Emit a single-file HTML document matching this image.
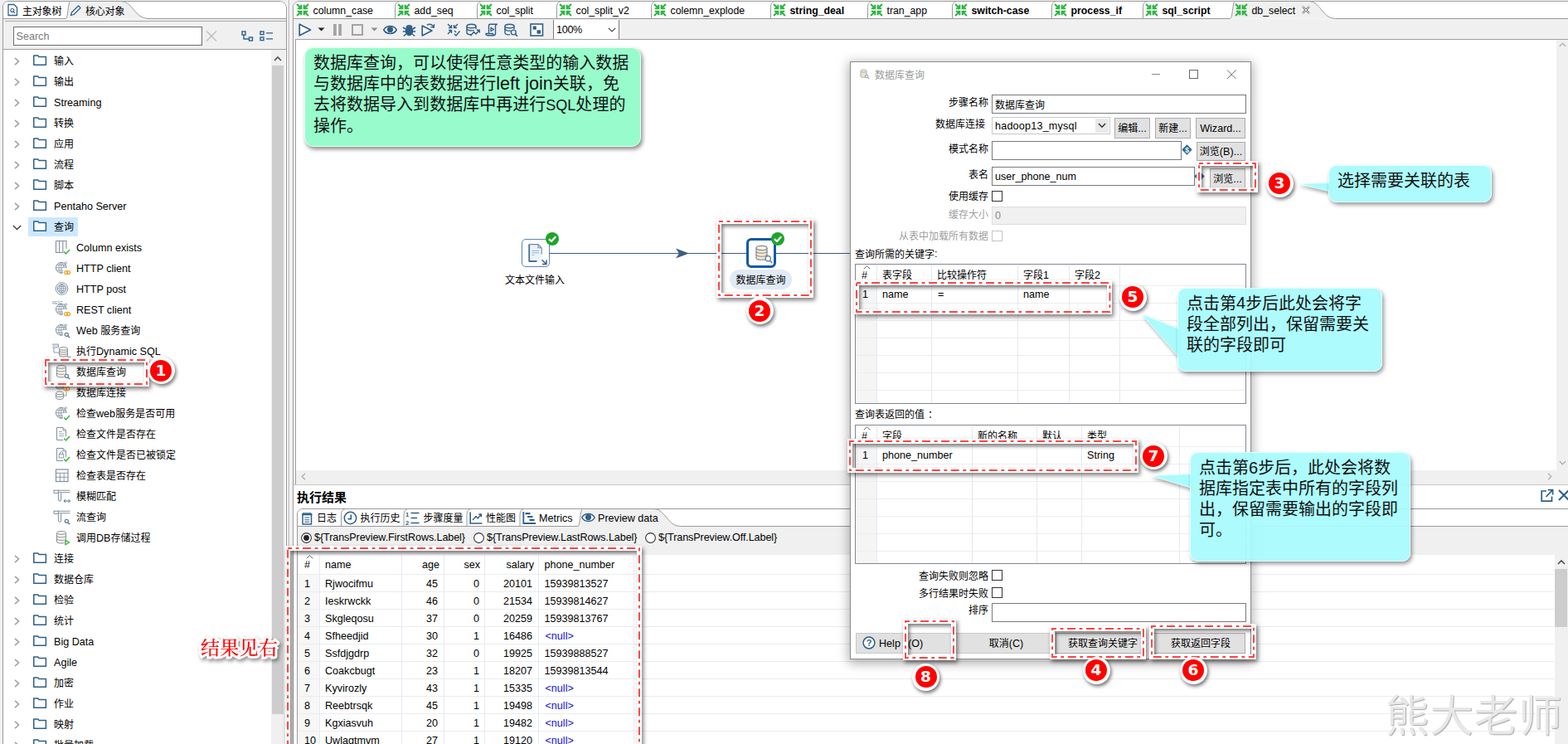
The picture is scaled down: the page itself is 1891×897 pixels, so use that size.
<!DOCTYPE html>
<html lang="zh-CN"><head><meta charset="utf-8"><title>Spoon - db_select</title>
<style>
*{box-sizing:border-box;margin:0;padding:0}
html,body{width:1891px;height:897px;overflow:hidden;background:#f0f0f0}
body{font-family:"Liberation Sans","Noto Sans CJK SC",sans-serif;font-size:12px;color:#000;position:relative}
i.l{font-style:normal;font-size:12.6px;position:relative;top:-0.5px}
.a{position:absolute}
.t{position:absolute;white-space:nowrap;line-height:16px;height:16px}
.r{text-align:right}
svg{position:absolute;overflow:visible}
.g{color:#8a8a8a}
.dash{position:absolute;border:6px solid rgba(255,255,255,.88);
  box-shadow:2px 3px 5px rgba(0,0,0,.5),inset 2px 3px 4px rgba(0,0,0,.5)}
.num{position:absolute;width:33px;height:33px;border-radius:50%;background:#fff;box-shadow:1.5px 2.5px 4px rgba(0,0,0,.55)}
.num b{position:absolute;left:3.5px;top:3.5px;width:26px;height:26px;border-radius:50%;background:#fe0000;color:#fff;
  font:bold 18.5px/26px "DejaVu Sans","Liberation Sans",sans-serif;text-align:center}
.bub{position:absolute;background:rgba(168,251,253,.94);border:1px solid #e8ffff;border-radius:10px;box-shadow:2px 3px 5px rgba(0,0,0,.4);
  font-size:20px;line-height:25px;color:#111}
.bub i.l,.note i.l{font-size:20px}
.note{position:absolute;background:#98fbcb;border:1px solid #e6fff2;border-radius:11px;box-shadow:2px 3px 5px rgba(0,0,0,.45);
  font-size:20px;line-height:25px;color:#111}
.btn{position:absolute;background:#e1e1e1;border:1px solid #adadad;text-align:center;white-space:nowrap}
.inp{position:absolute;background:#fff;border:1px solid #7a7a7a}
.cb{position:absolute;width:13px;height:13px;background:#fff;border:1px solid #333}
</style></head>
<body>
<div class="a " style="left:3px;top:1px;width:343px;height:900px;background:#f0f0f0;border:1px solid #9a9a9a;border-radius:7px 9px 0 0"></div>
<div class="a " style="left:4px;top:2px;width:341px;height:21px;background:#fff;border-radius:6px 8px 0 0"></div>
<svg style="left:0px;top:0px" width="1891" height="897" viewBox="0 0 1891 897"><path d="M79.3 22.5 C82.1 22.5 81.8 2.0 84.8 1.5 H146 C159.86 1.5 162.5 22.5 179 22.5 Z" fill="#f0f0f0"/><path d="M4 22.5 H79.3 C82.1 22.5 81.8 2.0 84.8 1.5 H146 C159.86 1.5 162.5 22.5 179 22.5 H345" fill="none" stroke="#9a9a9a"/></svg>
<div class="a " style="left:6px;top:25px;width:339px;height:1px;background:#a8a8a8"></div>
<svg style="left:9px;top:4px" width="13" height="16" viewBox="0 0 13 16"><path d="M1 1.5 H8 L11.5 5 V14.5 H1 Z" fill="#fff" stroke="#2f5f8a" stroke-width="1.3" stroke-linejoin="round"/><circle cx="5.8" cy="8.5" r="2" fill="none" stroke="#2f5f8a" stroke-width="1.1"/><path d="M7.3 10 L9 11.8" stroke="#2f5f8a" stroke-width="1.1"/></svg>
<div class="t " style="left:27px;top:5.5px;letter-spacing:-0.2px">主对象树</div>
<svg style="left:84px;top:5px" width="15" height="15" viewBox="0 0 15 15"><path d="M1.5 13.5 L2.5 10 L10.5 2 L13 4.5 L5 12.5 Z" fill="#fff" stroke="#2f5f8a" stroke-width="1.3" stroke-linejoin="round"/></svg>
<div class="t " style="left:103px;top:5.5px;letter-spacing:-0.2px">核心对象</div>
<div class="a " style="left:4px;top:26px;width:341px;height:33px;background:#f0f0f0"></div>
<div class="a " style="left:16px;top:32px;width:228px;height:23px;background:#fff;border:1px solid #6e6e6e"></div>
<div class="t " style="left:19.5px;top:36.0px;color:#7a7a7a;font-size:12px"><i class="l">Search</i></div>
<svg style="left:248px;top:37px" width="14" height="13" viewBox="0 0 14 13"><path d="M1 0.5 L13 12.5 M13 0.5 L1 12.5" stroke="#c4c4c4" stroke-width="1.6" fill="none"/></svg>
<svg style="left:291px;top:37px" width="15" height="13" viewBox="0 0 15 13"><rect x="1" y="1" width="4" height="4" fill="none" stroke="#2f5f8a" stroke-width="1.4"/><rect x="9.5" y="8" width="4" height="4" fill="none" stroke="#2f5f8a" stroke-width="1.4"/><path d="M3 5 V10 H9.5" fill="none" stroke="#2f5f8a" stroke-width="1.4"/></svg>
<svg style="left:313px;top:37px" width="16" height="13" viewBox="0 0 16 13"><rect x="1" y="1" width="4" height="3.6" fill="none" stroke="#2f5f8a" stroke-width="1.4"/><rect x="1" y="8" width="4" height="3.6" fill="none" stroke="#2f5f8a" stroke-width="1.4"/><path d="M8 2.8 H16 M8 9.8 H16" stroke="#2f5f8a" stroke-width="1.3"/></svg>
<div class="a " style="left:4px;top:59px;width:341px;height:1px;background:#a0a0a0"></div>
<div class="a " style="left:4px;top:60px;width:341px;height:840px;background:#fff"></div>
<div class="a " style="left:327px;top:60px;width:17px;height:840px;background:#f0f0f0"></div>
<div class="a " style="left:328px;top:79px;width:14px;height:782px;background:#cdcdcd"></div>
<svg style="left:330px;top:68px" width="10" height="6" viewBox="0 0 10 6"><path d="M1 5 L5 1 L9 5" fill="none" stroke="#505050" stroke-width="1.6"/></svg>
<svg style="left:17.3px;top:68.5px" width="7" height="10" viewBox="0 0 7 10"><path d="M1 0.8 L5.5 5 L1 9.2" fill="none" stroke="#a3a3a3" stroke-width="1.7"/></svg>
<svg style="left:40px;top:66.1px" width="17" height="13" viewBox="0 0 17 13"><path d="M0.75 1 H5.8 L7 2.6 H15.4 V12.2 H0.75 Z" fill="#fff" stroke="#2f5f8a" stroke-width="1.5" stroke-linejoin="round"/></svg>
<div class="t " style="left:65px;top:66.0px;">输入</div>
<svg style="left:17.3px;top:93.5px" width="7" height="10" viewBox="0 0 7 10"><path d="M1 0.8 L5.5 5 L1 9.2" fill="none" stroke="#a3a3a3" stroke-width="1.7"/></svg>
<svg style="left:40px;top:91.1px" width="17" height="13" viewBox="0 0 17 13"><path d="M0.75 1 H5.8 L7 2.6 H15.4 V12.2 H0.75 Z" fill="#fff" stroke="#2f5f8a" stroke-width="1.5" stroke-linejoin="round"/></svg>
<div class="t " style="left:65px;top:91.0px;">输出</div>
<svg style="left:17.3px;top:118.5px" width="7" height="10" viewBox="0 0 7 10"><path d="M1 0.8 L5.5 5 L1 9.2" fill="none" stroke="#a3a3a3" stroke-width="1.7"/></svg>
<svg style="left:40px;top:116.1px" width="17" height="13" viewBox="0 0 17 13"><path d="M0.75 1 H5.8 L7 2.6 H15.4 V12.2 H0.75 Z" fill="#fff" stroke="#2f5f8a" stroke-width="1.5" stroke-linejoin="round"/></svg>
<div class="t " style="left:65px;top:116.0px;"><i class="l">Streaming</i></div>
<svg style="left:17.3px;top:143.5px" width="7" height="10" viewBox="0 0 7 10"><path d="M1 0.8 L5.5 5 L1 9.2" fill="none" stroke="#a3a3a3" stroke-width="1.7"/></svg>
<svg style="left:40px;top:141.1px" width="17" height="13" viewBox="0 0 17 13"><path d="M0.75 1 H5.8 L7 2.6 H15.4 V12.2 H0.75 Z" fill="#fff" stroke="#2f5f8a" stroke-width="1.5" stroke-linejoin="round"/></svg>
<div class="t " style="left:65px;top:141.0px;">转换</div>
<svg style="left:17.3px;top:168.5px" width="7" height="10" viewBox="0 0 7 10"><path d="M1 0.8 L5.5 5 L1 9.2" fill="none" stroke="#a3a3a3" stroke-width="1.7"/></svg>
<svg style="left:40px;top:166.1px" width="17" height="13" viewBox="0 0 17 13"><path d="M0.75 1 H5.8 L7 2.6 H15.4 V12.2 H0.75 Z" fill="#fff" stroke="#2f5f8a" stroke-width="1.5" stroke-linejoin="round"/></svg>
<div class="t " style="left:65px;top:166.0px;">应用</div>
<svg style="left:17.3px;top:193.5px" width="7" height="10" viewBox="0 0 7 10"><path d="M1 0.8 L5.5 5 L1 9.2" fill="none" stroke="#a3a3a3" stroke-width="1.7"/></svg>
<svg style="left:40px;top:191.1px" width="17" height="13" viewBox="0 0 17 13"><path d="M0.75 1 H5.8 L7 2.6 H15.4 V12.2 H0.75 Z" fill="#fff" stroke="#2f5f8a" stroke-width="1.5" stroke-linejoin="round"/></svg>
<div class="t " style="left:65px;top:191.0px;">流程</div>
<svg style="left:17.3px;top:218.5px" width="7" height="10" viewBox="0 0 7 10"><path d="M1 0.8 L5.5 5 L1 9.2" fill="none" stroke="#a3a3a3" stroke-width="1.7"/></svg>
<svg style="left:40px;top:216.1px" width="17" height="13" viewBox="0 0 17 13"><path d="M0.75 1 H5.8 L7 2.6 H15.4 V12.2 H0.75 Z" fill="#fff" stroke="#2f5f8a" stroke-width="1.5" stroke-linejoin="round"/></svg>
<div class="t " style="left:65px;top:216.0px;">脚本</div>
<svg style="left:17.3px;top:243.5px" width="7" height="10" viewBox="0 0 7 10"><path d="M1 0.8 L5.5 5 L1 9.2" fill="none" stroke="#a3a3a3" stroke-width="1.7"/></svg>
<svg style="left:40px;top:241.1px" width="17" height="13" viewBox="0 0 17 13"><path d="M0.75 1 H5.8 L7 2.6 H15.4 V12.2 H0.75 Z" fill="#fff" stroke="#2f5f8a" stroke-width="1.5" stroke-linejoin="round"/></svg>
<div class="t " style="left:65px;top:241.0px;"><i class="l">Pentaho Server</i></div>
<div class="a " style="left:34px;top:262px;width:60px;height:23px;background:#cce8ff"></div>
<svg style="left:15px;top:270.5px" width="11" height="7" viewBox="0 0 11 7"><path d="M0.8 1 L5.5 5.5 L10.2 1" fill="none" stroke="#404040" stroke-width="1.5"/></svg>
<svg style="left:40px;top:266.1px" width="17" height="13" viewBox="0 0 17 13"><path d="M0.75 1 H5.8 L7 2.6 H15.4 V12.2 H0.75 Z" fill="#fff" stroke="#2f5f8a" stroke-width="1.5" stroke-linejoin="round"/></svg>
<div class="t " style="left:65px;top:266.0px;">查询</div>
<svg style="left:66px;top:289.0px" width="19" height="19" viewBox="0 0 19 19"><path d="M1.5 1.5 H14 V11 M1.5 1.5 V15.5 H10.5 M5.6 1.5 V15.5 M9.8 1.5 V15.5" fill="none" stroke="#8090a0" stroke-width="1.1"/><path d="M11.3 14.6 L13.5 16.9 L18 12" fill="none" stroke="#34b234" stroke-width="1.5"/></svg>
<div class="t " style="left:92px;top:291.0px;"><i class="l">Column exists</i></div>
<svg style="left:66px;top:314.0px" width="19" height="19" viewBox="0 0 19 19"><circle cx="7.8" cy="8.8" r="6.4" fill="#fff" stroke="#8090a0" stroke-width="1"/><ellipse cx="7.8" cy="8.8" rx="2.8800000000000003" ry="6.4" fill="none" stroke="#8090a0" stroke-width="0.8"/><path d="M1.3999999999999995 8.8 H14.2 M2.3599999999999994 5.6000000000000005 H13.24 M2.3599999999999994 12.0 H13.24 M7.8 2.4000000000000004 V15.200000000000001" stroke="#8090a0" stroke-width="0.8" fill="none"/><path d="M9.5 1.5 H19 V9.5 H14.5 V19 H9.5Z" fill="#fff" opacity="0"/><path d="M10 9 H19 V19 H10Z" fill="#fff"/><circle cx="13.3" cy="3" r="1.2" fill="#fff" stroke="#8090a0" stroke-width="0.8"/><circle cx="12.3" cy="6.5" r="0.9" fill="#fff" stroke="#8090a0" stroke-width="0.7"/><circle cx="13.6" cy="14.6" r="2" fill="none" stroke="#f5a01e" stroke-width="1.2"/><circle cx="16.6" cy="14.6" r="2" fill="none" stroke="#f5a01e" stroke-width="1.2"/></svg>
<div class="t " style="left:92px;top:316.0px;"><i class="l">HTTP client</i></div>
<svg style="left:66px;top:339.0px" width="19" height="19" viewBox="0 0 19 19"><circle cx="8.5" cy="9" r="7.3" fill="#fff" stroke="#8090a0" stroke-width="1"/><circle cx="8.5" cy="9" r="5.2" fill="#fff" stroke="#8090a0" stroke-width="1"/><ellipse cx="8.5" cy="9" rx="2.3400000000000003" ry="5.2" fill="none" stroke="#8090a0" stroke-width="0.8"/><path d="M3.3 9 H13.7 M4.08 6.4 H12.92 M4.08 11.6 H12.92 M8.5 3.8 V14.2" stroke="#8090a0" stroke-width="0.8" fill="none"/></svg>
<div class="t " style="left:92px;top:341.0px;"><i class="l">HTTP post</i></div>
<svg style="left:66px;top:364.0px" width="19" height="19" viewBox="0 0 19 19"><circle cx="7.8" cy="8.8" r="6.4" fill="#fff" stroke="#8090a0" stroke-width="1"/><ellipse cx="7.8" cy="8.8" rx="2.8800000000000003" ry="6.4" fill="none" stroke="#8090a0" stroke-width="0.8"/><path d="M1.3999999999999995 8.8 H14.2 M2.3599999999999994 5.6000000000000005 H13.24 M2.3599999999999994 12.0 H13.24 M7.8 2.4000000000000004 V15.200000000000001" stroke="#8090a0" stroke-width="0.8" fill="none"/><path d="M9.5 1.5 H19 V9.5 H14.5 V19 H9.5Z" fill="#fff" opacity="0"/><path d="M10 9 H19 V19 H10Z" fill="#fff"/><circle cx="13.3" cy="3" r="1.2" fill="#fff" stroke="#8090a0" stroke-width="0.8"/><circle cx="12.3" cy="6.5" r="0.9" fill="#fff" stroke="#8090a0" stroke-width="0.7"/><circle cx="13.6" cy="14.6" r="2" fill="none" stroke="#f5a01e" stroke-width="1.2"/><circle cx="16.6" cy="14.6" r="2" fill="none" stroke="#f5a01e" stroke-width="1.2"/><text x="-3" y="3.2" font-size="4.6" font-family="Liberation Sans,sans-serif" fill="#8090a0">REST</text></svg>
<div class="t " style="left:92px;top:366.0px;"><i class="l">REST client</i></div>
<svg style="left:66px;top:389.0px" width="19" height="19" viewBox="0 0 19 19"><circle cx="7.8" cy="8.8" r="6.4" fill="#fff" stroke="#8090a0" stroke-width="1"/><ellipse cx="7.8" cy="8.8" rx="2.8800000000000003" ry="6.4" fill="none" stroke="#8090a0" stroke-width="0.8"/><path d="M1.3999999999999995 8.8 H14.2 M2.3599999999999994 5.6000000000000005 H13.24 M2.3599999999999994 12.0 H13.24 M7.8 2.4000000000000004 V15.200000000000001" stroke="#8090a0" stroke-width="0.8" fill="none"/><path d="M9.5 1.5 H19 V9.5 H14.5 V19 H9.5Z" fill="#fff" opacity="0"/><path d="M10 9 H19 V19 H10Z" fill="#fff"/><circle cx="13.3" cy="3" r="1.2" fill="#fff" stroke="#8090a0" stroke-width="0.8"/><circle cx="12.3" cy="6.5" r="0.9" fill="#fff" stroke="#8090a0" stroke-width="0.7"/><circle cx="14.3" cy="14.3" r="2.1" fill="#fff" stroke="#54708c" stroke-width="1.1"/><path d="M15.9 15.9 L18.2 18.2" stroke="#54708c" stroke-width="1.3"/></svg>
<div class="t " style="left:92px;top:391.0px;"><i class="l">Web </i>服务查询</div>
<svg style="left:66px;top:414.0px" width="19" height="19" viewBox="0 0 19 19"><path d="M5.5 6.4 V14.1 C5.5 16.6 15.5 16.6 15.5 14.1 V6.4" fill="#fdf3e4" stroke="#8090a0" stroke-width="1"/><ellipse cx="10.5" cy="6.4" rx="5.0" ry="1.9" fill="#fffaf2" stroke="#8090a0" stroke-width="1"/><path d="M5.5 8.966666666666667 C5.5 11.466666666666667 15.5 11.466666666666667 15.5 8.966666666666667" fill="none" stroke="#8090a0" stroke-width="0.9"/><path d="M5.5 11.533333333333335 C5.5 14.033333333333335 15.5 14.033333333333335 15.5 11.533333333333335" fill="none" stroke="#8090a0" stroke-width="0.9"/><path d="M-3 1 H4.5 V5 H-3" fill="#fff" stroke="#8090a0" stroke-width="0.8"/><text x="-2.8" y="4.2" font-size="3.8" font-family="Liberation Sans,sans-serif" fill="#8090a0">SQL</text><path d="M-1 5 V11 H5.5" fill="none" stroke="#8090a0" stroke-width="0.9"/><path d="M15 15 L18 18 M18.3 15.4 V18.3 H15.4" stroke="#54708c" stroke-width="1" fill="none"/></svg>
<div class="t " style="left:92px;top:416.0px;">执行<i class="l">Dynamic SQL</i></div>
<svg style="left:66px;top:439.0px" width="19" height="19" viewBox="0 0 19 19"><path d="M2.5 3.4 V14.1 C2.5 16.6 13.5 16.6 13.5 14.1 V3.4" fill="#fdf3e4" stroke="#8090a0" stroke-width="1"/><ellipse cx="8.0" cy="3.4" rx="5.5" ry="1.9" fill="#fffaf2" stroke="#8090a0" stroke-width="1"/><path d="M2.5 6.966666666666667 C2.5 9.466666666666667 13.5 9.466666666666667 13.5 6.966666666666667" fill="none" stroke="#8090a0" stroke-width="0.9"/><path d="M2.5 10.533333333333333 C2.5 13.033333333333333 13.5 13.033333333333333 13.5 10.533333333333333" fill="none" stroke="#8090a0" stroke-width="0.9"/><path d="M11.5 11.5 H19 V19 H11.5Z" fill="#fff"/><circle cx="14.3" cy="14.3" r="2.1" fill="#fff" stroke="#54708c" stroke-width="1.1"/><path d="M15.9 15.9 L18.2 18.2" stroke="#54708c" stroke-width="1.3"/></svg>
<div class="t " style="left:92px;top:441.0px;">数据库查询</div>
<svg style="left:66px;top:464.0px" width="19" height="19" viewBox="0 0 19 19"><path d="M1.5 -0.10000000000000009 V3.1 C1.5 5.6 10.5 5.6 10.5 3.1 V-0.10000000000000009" fill="#fdf3e4" stroke="#8090a0" stroke-width="1"/><ellipse cx="6.0" cy="-0.10000000000000009" rx="4.5" ry="1.9" fill="#fffaf2" stroke="#8090a0" stroke-width="1"/><path d="M1.5 1.5 C1.5 4.0 10.5 4.0 10.5 1.5" fill="none" stroke="#8090a0" stroke-width="0.9"/><path d="M1.5 9.9 V15.6 C1.5 18.1 10.5 18.1 10.5 15.6 V9.9" fill="#fdf3e4" stroke="#8090a0" stroke-width="1"/><ellipse cx="6.0" cy="9.9" rx="4.5" ry="1.9" fill="#fffaf2" stroke="#8090a0" stroke-width="1"/><path d="M1.5 12.75 C1.5 15.25 10.5 15.25 10.5 12.75" fill="none" stroke="#8090a0" stroke-width="0.9"/><path d="M10.5 13 H14 V7.5" fill="none" stroke="#8090a0" stroke-width="0.9"/><circle cx="12.8" cy="4.8" r="2" fill="#fff" stroke="#f5a01e" stroke-width="1.2"/><circle cx="15.8" cy="4.8" r="2" fill="none" stroke="#f5a01e" stroke-width="1.2"/></svg>
<div class="t " style="left:92px;top:466.0px;">数据库连接</div>
<svg style="left:66px;top:489.0px" width="19" height="19" viewBox="0 0 19 19"><circle cx="7.8" cy="8.8" r="6.4" fill="#fff" stroke="#8090a0" stroke-width="1"/><ellipse cx="7.8" cy="8.8" rx="2.8800000000000003" ry="6.4" fill="none" stroke="#8090a0" stroke-width="0.8"/><path d="M1.3999999999999995 8.8 H14.2 M2.3599999999999994 5.6000000000000005 H13.24 M2.3599999999999994 12.0 H13.24 M7.8 2.4000000000000004 V15.200000000000001" stroke="#8090a0" stroke-width="0.8" fill="none"/><path d="M9.5 1.5 H19 V9.5 H14.5 V19 H9.5Z" fill="#fff" opacity="0"/><path d="M10 9 H19 V19 H10Z" fill="#fff"/><circle cx="13.3" cy="3" r="1.2" fill="#fff" stroke="#8090a0" stroke-width="0.8"/><circle cx="12.3" cy="6.5" r="0.9" fill="#fff" stroke="#8090a0" stroke-width="0.7"/><path d="M11.3 14.6 L13.5 16.9 L18 12" fill="none" stroke="#34b234" stroke-width="1.5"/></svg>
<div class="t " style="left:92px;top:491.0px;">检查<i class="l">web</i>服务是否可用</div>
<svg style="left:66px;top:514.0px" width="19" height="19" viewBox="0 0 19 19"><path d="M2.5 1.5 H10 L13.5 5 V12 M2.5 1.5 V16.5 H10 M10 1.5 V5 H13.5" fill="none" stroke="#8090a0" stroke-width="1"/><path d="M5 6.5 H9 M5 9 H11 M5 11.5 H11" stroke="#8090a0" stroke-width="0.8"/><path d="M11.3 14.6 L13.5 16.9 L18 12" fill="none" stroke="#34b234" stroke-width="1.5"/></svg>
<div class="t " style="left:92px;top:516.0px;">检查文件是否存在</div>
<svg style="left:66px;top:539.0px" width="19" height="19" viewBox="0 0 19 19"><path d="M2.5 1.5 H10 L13.5 5 V12 M2.5 1.5 V16.5 H10 M10 1.5 V5 H13.5" fill="none" stroke="#8090a0" stroke-width="1"/><rect x="5.2" y="8.6" width="5.6" height="4.2" fill="none" stroke="#8090a0" stroke-width="0.9"/><path d="M6.4 8.6 V7.2 A1.6 1.6 0 0 1 9.6 7.2 V8.6" fill="none" stroke="#8090a0" stroke-width="0.9"/><path d="M11.3 14.6 L13.5 16.9 L18 12" fill="none" stroke="#34b234" stroke-width="1.5"/></svg>
<div class="t " style="left:92px;top:541.0px;">检查文件是否已被锁定</div>
<svg style="left:66px;top:564.0px" width="19" height="19" viewBox="0 0 19 19"><rect x="1.5" y="2" width="14.5" height="14.5" fill="#fff" stroke="#8090a0" stroke-width="1.2"/><path d="M1.5 6.3 H16 M1.5 11.3 H16 M6.4 6.3 V16.5 M11.2 6.3 V16.5" stroke="#8090a0" stroke-width="0.9"/></svg>
<div class="t " style="left:92px;top:566.0px;">检查表是否存在</div>
<svg style="left:66px;top:589.0px" width="19" height="19" viewBox="0 0 19 19"><path d="M-1 2.2 H18.5 M5 4.8 H18.5" stroke="#8090a0" stroke-width="1.1"/><path d="M-1 1.6 V5.4 H4.4 V1.6" fill="none" stroke="#8090a0" stroke-width="1"/><path d="M4.4 5 V14 C4.4 15.6 7.6 15.6 7.6 14 V5" fill="#fff" stroke="#8090a0" stroke-width="1"/><path d="M11 15 H18.5 M13 13 L11 15 L13 17 M16.5 13 L18.5 15 L16.5 17" fill="none" stroke="#54708c" stroke-width="1"/></svg>
<div class="t " style="left:92px;top:591.0px;">模糊匹配</div>
<svg style="left:66px;top:614.0px" width="19" height="19" viewBox="0 0 19 19"><path d="M-1 2.2 H18.5 M5 4.8 H18.5" stroke="#8090a0" stroke-width="1.1"/><path d="M-1 1.6 V5.4 H4.4 V1.6" fill="none" stroke="#8090a0" stroke-width="1"/><path d="M4.4 5 V14 C4.4 15.6 7.6 15.6 7.6 14 V5" fill="#fff" stroke="#8090a0" stroke-width="1"/><circle cx="14.3" cy="14.3" r="2.1" fill="#fff" stroke="#54708c" stroke-width="1.1"/><path d="M15.9 15.9 L18.2 18.2" stroke="#54708c" stroke-width="1.3"/></svg>
<div class="t " style="left:92px;top:616.0px;">流查询</div>
<svg style="left:66px;top:639.0px" width="19" height="19" viewBox="0 0 19 19"><path d="M2.5 3.4 V14.1 C2.5 16.6 13.5 16.6 13.5 14.1 V3.4" fill="#fdf3e4" stroke="#8090a0" stroke-width="1"/><ellipse cx="8.0" cy="3.4" rx="5.5" ry="1.9" fill="#fffaf2" stroke="#8090a0" stroke-width="1"/><path d="M2.5 6.966666666666667 C2.5 9.466666666666667 13.5 9.466666666666667 13.5 6.966666666666667" fill="none" stroke="#8090a0" stroke-width="0.9"/><path d="M2.5 10.533333333333333 C2.5 13.033333333333333 13.5 13.033333333333333 13.5 10.533333333333333" fill="none" stroke="#8090a0" stroke-width="0.9"/><path d="M11.5 11.5 H19 V19 H11.5Z" fill="#fff"/><path d="M12.8 12.2 L17.6 15 L12.8 17.8 Z" fill="#fff" stroke="#34b234" stroke-width="1.3" stroke-linejoin="round"/></svg>
<div class="t " style="left:92px;top:641.0px;">调用<i class="l">DB</i>存储过程</div>
<svg style="left:17.3px;top:668.5px" width="7" height="10" viewBox="0 0 7 10"><path d="M1 0.8 L5.5 5 L1 9.2" fill="none" stroke="#a3a3a3" stroke-width="1.7"/></svg>
<svg style="left:40px;top:666.1px" width="17" height="13" viewBox="0 0 17 13"><path d="M0.75 1 H5.8 L7 2.6 H15.4 V12.2 H0.75 Z" fill="#fff" stroke="#2f5f8a" stroke-width="1.5" stroke-linejoin="round"/></svg>
<div class="t " style="left:65px;top:666.0px;">连接</div>
<svg style="left:17.3px;top:693.5px" width="7" height="10" viewBox="0 0 7 10"><path d="M1 0.8 L5.5 5 L1 9.2" fill="none" stroke="#a3a3a3" stroke-width="1.7"/></svg>
<svg style="left:40px;top:691.1px" width="17" height="13" viewBox="0 0 17 13"><path d="M0.75 1 H5.8 L7 2.6 H15.4 V12.2 H0.75 Z" fill="#fff" stroke="#2f5f8a" stroke-width="1.5" stroke-linejoin="round"/></svg>
<div class="t " style="left:65px;top:691.0px;">数据仓库</div>
<svg style="left:17.3px;top:718.5px" width="7" height="10" viewBox="0 0 7 10"><path d="M1 0.8 L5.5 5 L1 9.2" fill="none" stroke="#a3a3a3" stroke-width="1.7"/></svg>
<svg style="left:40px;top:716.1px" width="17" height="13" viewBox="0 0 17 13"><path d="M0.75 1 H5.8 L7 2.6 H15.4 V12.2 H0.75 Z" fill="#fff" stroke="#2f5f8a" stroke-width="1.5" stroke-linejoin="round"/></svg>
<div class="t " style="left:65px;top:716.0px;">检验</div>
<svg style="left:17.3px;top:743.5px" width="7" height="10" viewBox="0 0 7 10"><path d="M1 0.8 L5.5 5 L1 9.2" fill="none" stroke="#a3a3a3" stroke-width="1.7"/></svg>
<svg style="left:40px;top:741.1px" width="17" height="13" viewBox="0 0 17 13"><path d="M0.75 1 H5.8 L7 2.6 H15.4 V12.2 H0.75 Z" fill="#fff" stroke="#2f5f8a" stroke-width="1.5" stroke-linejoin="round"/></svg>
<div class="t " style="left:65px;top:741.0px;">统计</div>
<svg style="left:17.3px;top:768.5px" width="7" height="10" viewBox="0 0 7 10"><path d="M1 0.8 L5.5 5 L1 9.2" fill="none" stroke="#a3a3a3" stroke-width="1.7"/></svg>
<svg style="left:40px;top:766.1px" width="17" height="13" viewBox="0 0 17 13"><path d="M0.75 1 H5.8 L7 2.6 H15.4 V12.2 H0.75 Z" fill="#fff" stroke="#2f5f8a" stroke-width="1.5" stroke-linejoin="round"/></svg>
<div class="t " style="left:65px;top:766.0px;"><i class="l">Big Data</i></div>
<svg style="left:17.3px;top:793.5px" width="7" height="10" viewBox="0 0 7 10"><path d="M1 0.8 L5.5 5 L1 9.2" fill="none" stroke="#a3a3a3" stroke-width="1.7"/></svg>
<svg style="left:40px;top:791.1px" width="17" height="13" viewBox="0 0 17 13"><path d="M0.75 1 H5.8 L7 2.6 H15.4 V12.2 H0.75 Z" fill="#fff" stroke="#2f5f8a" stroke-width="1.5" stroke-linejoin="round"/></svg>
<div class="t " style="left:65px;top:791.0px;"><i class="l">Agile</i></div>
<svg style="left:17.3px;top:818.5px" width="7" height="10" viewBox="0 0 7 10"><path d="M1 0.8 L5.5 5 L1 9.2" fill="none" stroke="#a3a3a3" stroke-width="1.7"/></svg>
<svg style="left:40px;top:816.1px" width="17" height="13" viewBox="0 0 17 13"><path d="M0.75 1 H5.8 L7 2.6 H15.4 V12.2 H0.75 Z" fill="#fff" stroke="#2f5f8a" stroke-width="1.5" stroke-linejoin="round"/></svg>
<div class="t " style="left:65px;top:816.0px;">加密</div>
<svg style="left:17.3px;top:843.5px" width="7" height="10" viewBox="0 0 7 10"><path d="M1 0.8 L5.5 5 L1 9.2" fill="none" stroke="#a3a3a3" stroke-width="1.7"/></svg>
<svg style="left:40px;top:841.1px" width="17" height="13" viewBox="0 0 17 13"><path d="M0.75 1 H5.8 L7 2.6 H15.4 V12.2 H0.75 Z" fill="#fff" stroke="#2f5f8a" stroke-width="1.5" stroke-linejoin="round"/></svg>
<div class="t " style="left:65px;top:841.0px;">作业</div>
<svg style="left:17.3px;top:868.5px" width="7" height="10" viewBox="0 0 7 10"><path d="M1 0.8 L5.5 5 L1 9.2" fill="none" stroke="#a3a3a3" stroke-width="1.7"/></svg>
<svg style="left:40px;top:866.1px" width="17" height="13" viewBox="0 0 17 13"><path d="M0.75 1 H5.8 L7 2.6 H15.4 V12.2 H0.75 Z" fill="#fff" stroke="#2f5f8a" stroke-width="1.5" stroke-linejoin="round"/></svg>
<div class="t " style="left:65px;top:866.0px;">映射</div>
<svg style="left:17.3px;top:893.5px" width="7" height="10" viewBox="0 0 7 10"><path d="M1 0.8 L5.5 5 L1 9.2" fill="none" stroke="#a3a3a3" stroke-width="1.7"/></svg>
<svg style="left:40px;top:891.1px" width="17" height="13" viewBox="0 0 17 13"><path d="M0.75 1 H5.8 L7 2.6 H15.4 V12.2 H0.75 Z" fill="#fff" stroke="#2f5f8a" stroke-width="1.5" stroke-linejoin="round"/></svg>
<div class="t " style="left:65px;top:891.0px;">批量加载</div>
<div class="a " style="left:346px;top:0px;width:8px;height:897px;background:#f0f0f0"></div>
<div class="a " style="left:348px;top:0px;width:1px;height:897px;background:#b4b4b4"></div>
<div class="a " style="left:349px;top:0px;width:1px;height:897px;background:#fdfdfd"></div>
<div class="a " style="left:353px;top:1px;width:1545px;height:900px;background:#f0f0f0;border:1px solid #a0a0a0;border-radius:8px 0 0 0"></div>
<div class="a " style="left:354px;top:2px;width:1540px;height:21px;background:#fff;border-radius:7px 0 0 0"></div>
<svg style="left:0px;top:0px" width="1891" height="897" viewBox="0 0 1891 897"><path d="M1483.8 22.5 C1486.6 22.5 1486.3 2.0 1489.3 1.5 H1579 C1592.23 1.5 1594.75 22.5 1610.5 22.5 Z" fill="#f0f0f0"/><path d="M354 22.5 H1483.8 C1486.6 22.5 1486.3 2.0 1489.3 1.5 H1579 C1592.23 1.5 1594.75 22.5 1610.5 22.5 H1891" fill="none" stroke="#9a9a9a"/><path d="M476.5 22.5 V8.5 C476.5 4.5 478.0 2.3 481.5 1.5" fill="none" stroke="#9a9a9a"/><path d="M575.5 22.5 V8.5 C575.5 4.5 577.0 2.3 580.5 1.5" fill="none" stroke="#9a9a9a"/><path d="M671.5 22.5 V8.5 C671.5 4.5 673.0 2.3 676.5 1.5" fill="none" stroke="#9a9a9a"/><path d="M785.5 22.5 V8.5 C785.5 4.5 787.0 2.3 790.5 1.5" fill="none" stroke="#9a9a9a"/><path d="M929.5 22.5 V8.5 C929.5 4.5 931.0 2.3 934.5 1.5" fill="none" stroke="#9a9a9a"/><path d="M1046.5 22.5 V8.5 C1046.5 4.5 1048.0 2.3 1051.5 1.5" fill="none" stroke="#9a9a9a"/><path d="M1148.5 22.5 V8.5 C1148.5 4.5 1150.0 2.3 1153.5 1.5" fill="none" stroke="#9a9a9a"/><path d="M1268.5 22.5 V8.5 C1268.5 4.5 1270.0 2.3 1273.5 1.5" fill="none" stroke="#9a9a9a"/><path d="M1378.5 22.5 V8.5 C1378.5 4.5 1380.0 2.3 1383.5 1.5" fill="none" stroke="#9a9a9a"/></svg>
<svg style="left:357px;top:4px" width="16" height="16" viewBox="0 0 15 15"><path d="M1.0 1.0 L5.9 5.9 M1.7000000000000002 5.9 H5.9 V1.7000000000000002" fill="none" stroke="#2fb344" stroke-width="2" stroke-linejoin="miter"/><path d="M14.0 1.0 L9.1 5.9 M13.3 5.9 H9.1 V1.7000000000000002" fill="none" stroke="#2fb344" stroke-width="2" stroke-linejoin="miter"/><path d="M1.0 14.0 L5.9 9.1 M1.7000000000000002 9.1 H5.9 V13.3" fill="none" stroke="#2fb344" stroke-width="2" stroke-linejoin="miter"/><path d="M14.0 14.0 L9.1 9.1 M13.3 9.1 H9.1 V13.3" fill="none" stroke="#2fb344" stroke-width="2" stroke-linejoin="miter"/></svg>
<div class="t " style="left:377.5px;top:5.0px;font-size:12.3px">column_case</div>
<svg style="left:479px;top:4px" width="16" height="16" viewBox="0 0 15 15"><path d="M1.0 1.0 L5.9 5.9 M1.7000000000000002 5.9 H5.9 V1.7000000000000002" fill="none" stroke="#2fb344" stroke-width="2" stroke-linejoin="miter"/><path d="M14.0 1.0 L9.1 5.9 M13.3 5.9 H9.1 V1.7000000000000002" fill="none" stroke="#2fb344" stroke-width="2" stroke-linejoin="miter"/><path d="M1.0 14.0 L5.9 9.1 M1.7000000000000002 9.1 H5.9 V13.3" fill="none" stroke="#2fb344" stroke-width="2" stroke-linejoin="miter"/><path d="M14.0 14.0 L9.1 9.1 M13.3 9.1 H9.1 V13.3" fill="none" stroke="#2fb344" stroke-width="2" stroke-linejoin="miter"/></svg>
<div class="t " style="left:499.5px;top:5.0px;font-size:12.3px">add_seq</div>
<svg style="left:578px;top:4px" width="16" height="16" viewBox="0 0 15 15"><path d="M1.0 1.0 L5.9 5.9 M1.7000000000000002 5.9 H5.9 V1.7000000000000002" fill="none" stroke="#2fb344" stroke-width="2" stroke-linejoin="miter"/><path d="M14.0 1.0 L9.1 5.9 M13.3 5.9 H9.1 V1.7000000000000002" fill="none" stroke="#2fb344" stroke-width="2" stroke-linejoin="miter"/><path d="M1.0 14.0 L5.9 9.1 M1.7000000000000002 9.1 H5.9 V13.3" fill="none" stroke="#2fb344" stroke-width="2" stroke-linejoin="miter"/><path d="M14.0 14.0 L9.1 9.1 M13.3 9.1 H9.1 V13.3" fill="none" stroke="#2fb344" stroke-width="2" stroke-linejoin="miter"/></svg>
<div class="t " style="left:598.5px;top:5.0px;font-size:12.3px">col_split</div>
<svg style="left:674px;top:4px" width="16" height="16" viewBox="0 0 15 15"><path d="M1.0 1.0 L5.9 5.9 M1.7000000000000002 5.9 H5.9 V1.7000000000000002" fill="none" stroke="#2fb344" stroke-width="2" stroke-linejoin="miter"/><path d="M14.0 1.0 L9.1 5.9 M13.3 5.9 H9.1 V1.7000000000000002" fill="none" stroke="#2fb344" stroke-width="2" stroke-linejoin="miter"/><path d="M1.0 14.0 L5.9 9.1 M1.7000000000000002 9.1 H5.9 V13.3" fill="none" stroke="#2fb344" stroke-width="2" stroke-linejoin="miter"/><path d="M14.0 14.0 L9.1 9.1 M13.3 9.1 H9.1 V13.3" fill="none" stroke="#2fb344" stroke-width="2" stroke-linejoin="miter"/></svg>
<div class="t " style="left:694.5px;top:5.0px;font-size:12.3px">col_split_v2</div>
<svg style="left:788px;top:4px" width="16" height="16" viewBox="0 0 15 15"><path d="M1.0 1.0 L5.9 5.9 M1.7000000000000002 5.9 H5.9 V1.7000000000000002" fill="none" stroke="#2fb344" stroke-width="2" stroke-linejoin="miter"/><path d="M14.0 1.0 L9.1 5.9 M13.3 5.9 H9.1 V1.7000000000000002" fill="none" stroke="#2fb344" stroke-width="2" stroke-linejoin="miter"/><path d="M1.0 14.0 L5.9 9.1 M1.7000000000000002 9.1 H5.9 V13.3" fill="none" stroke="#2fb344" stroke-width="2" stroke-linejoin="miter"/><path d="M14.0 14.0 L9.1 9.1 M13.3 9.1 H9.1 V13.3" fill="none" stroke="#2fb344" stroke-width="2" stroke-linejoin="miter"/></svg>
<div class="t " style="left:808.5px;top:5.0px;font-size:12.3px">colemn_explode</div>
<svg style="left:932px;top:4px" width="16" height="16" viewBox="0 0 15 15"><path d="M1.0 1.0 L5.9 5.9 M1.7000000000000002 5.9 H5.9 V1.7000000000000002" fill="none" stroke="#2fb344" stroke-width="2" stroke-linejoin="miter"/><path d="M14.0 1.0 L9.1 5.9 M13.3 5.9 H9.1 V1.7000000000000002" fill="none" stroke="#2fb344" stroke-width="2" stroke-linejoin="miter"/><path d="M1.0 14.0 L5.9 9.1 M1.7000000000000002 9.1 H5.9 V13.3" fill="none" stroke="#2fb344" stroke-width="2" stroke-linejoin="miter"/><path d="M14.0 14.0 L9.1 9.1 M13.3 9.1 H9.1 V13.3" fill="none" stroke="#2fb344" stroke-width="2" stroke-linejoin="miter"/></svg>
<div class="t " style="left:952.5px;top:5.0px;font-weight:bold;font-size:12.3px">string_deal</div>
<svg style="left:1049px;top:4px" width="16" height="16" viewBox="0 0 15 15"><path d="M1.0 1.0 L5.9 5.9 M1.7000000000000002 5.9 H5.9 V1.7000000000000002" fill="none" stroke="#2fb344" stroke-width="2" stroke-linejoin="miter"/><path d="M14.0 1.0 L9.1 5.9 M13.3 5.9 H9.1 V1.7000000000000002" fill="none" stroke="#2fb344" stroke-width="2" stroke-linejoin="miter"/><path d="M1.0 14.0 L5.9 9.1 M1.7000000000000002 9.1 H5.9 V13.3" fill="none" stroke="#2fb344" stroke-width="2" stroke-linejoin="miter"/><path d="M14.0 14.0 L9.1 9.1 M13.3 9.1 H9.1 V13.3" fill="none" stroke="#2fb344" stroke-width="2" stroke-linejoin="miter"/></svg>
<div class="t " style="left:1069.5px;top:5.0px;font-size:12.3px">tran_app</div>
<svg style="left:1151px;top:4px" width="16" height="16" viewBox="0 0 15 15"><path d="M1.0 1.0 L5.9 5.9 M1.7000000000000002 5.9 H5.9 V1.7000000000000002" fill="none" stroke="#2fb344" stroke-width="2" stroke-linejoin="miter"/><path d="M14.0 1.0 L9.1 5.9 M13.3 5.9 H9.1 V1.7000000000000002" fill="none" stroke="#2fb344" stroke-width="2" stroke-linejoin="miter"/><path d="M1.0 14.0 L5.9 9.1 M1.7000000000000002 9.1 H5.9 V13.3" fill="none" stroke="#2fb344" stroke-width="2" stroke-linejoin="miter"/><path d="M14.0 14.0 L9.1 9.1 M13.3 9.1 H9.1 V13.3" fill="none" stroke="#2fb344" stroke-width="2" stroke-linejoin="miter"/></svg>
<div class="t " style="left:1171.5px;top:5.0px;font-weight:bold;font-size:12.3px">switch-case</div>
<svg style="left:1271px;top:4px" width="16" height="16" viewBox="0 0 15 15"><path d="M1.0 1.0 L5.9 5.9 M1.7000000000000002 5.9 H5.9 V1.7000000000000002" fill="none" stroke="#2fb344" stroke-width="2" stroke-linejoin="miter"/><path d="M14.0 1.0 L9.1 5.9 M13.3 5.9 H9.1 V1.7000000000000002" fill="none" stroke="#2fb344" stroke-width="2" stroke-linejoin="miter"/><path d="M1.0 14.0 L5.9 9.1 M1.7000000000000002 9.1 H5.9 V13.3" fill="none" stroke="#2fb344" stroke-width="2" stroke-linejoin="miter"/><path d="M14.0 14.0 L9.1 9.1 M13.3 9.1 H9.1 V13.3" fill="none" stroke="#2fb344" stroke-width="2" stroke-linejoin="miter"/></svg>
<div class="t " style="left:1291.5px;top:5.0px;font-weight:bold;font-size:12.3px">process_if</div>
<svg style="left:1381px;top:4px" width="16" height="16" viewBox="0 0 15 15"><path d="M1.0 1.0 L5.9 5.9 M1.7000000000000002 5.9 H5.9 V1.7000000000000002" fill="none" stroke="#2fb344" stroke-width="2" stroke-linejoin="miter"/><path d="M14.0 1.0 L9.1 5.9 M13.3 5.9 H9.1 V1.7000000000000002" fill="none" stroke="#2fb344" stroke-width="2" stroke-linejoin="miter"/><path d="M1.0 14.0 L5.9 9.1 M1.7000000000000002 9.1 H5.9 V13.3" fill="none" stroke="#2fb344" stroke-width="2" stroke-linejoin="miter"/><path d="M14.0 14.0 L9.1 9.1 M13.3 9.1 H9.1 V13.3" fill="none" stroke="#2fb344" stroke-width="2" stroke-linejoin="miter"/></svg>
<div class="t " style="left:1401.5px;top:5.0px;font-weight:bold;font-size:12.3px">sql_script</div>
<svg style="left:1489px;top:4px" width="16" height="16" viewBox="0 0 15 15"><path d="M1.0 1.0 L5.9 5.9 M1.7000000000000002 5.9 H5.9 V1.7000000000000002" fill="none" stroke="#2fb344" stroke-width="2" stroke-linejoin="miter"/><path d="M14.0 1.0 L9.1 5.9 M13.3 5.9 H9.1 V1.7000000000000002" fill="none" stroke="#2fb344" stroke-width="2" stroke-linejoin="miter"/><path d="M1.0 14.0 L5.9 9.1 M1.7000000000000002 9.1 H5.9 V13.3" fill="none" stroke="#2fb344" stroke-width="2" stroke-linejoin="miter"/><path d="M14.0 14.0 L9.1 9.1 M13.3 9.1 H9.1 V13.3" fill="none" stroke="#2fb344" stroke-width="2" stroke-linejoin="miter"/></svg>
<div class="t " style="left:1509.5px;top:5.0px;font-size:12.3px">db_select</div>
<svg style="left:1570px;top:7px" width="10" height="10" viewBox="0 0 10 10"><path d="M1 1 L9 9 M9 1 L1 9" stroke="#666" stroke-width="2.2"/><path d="M1 1 L9 9 M9 1 L1 9" stroke="#fff" stroke-width="0.9"/></svg>
<div class="a " style="left:354px;top:23px;width:1540px;height:24px;background:#f0f0f0"></div>
<svg style="left:360px;top:28px" width="16" height="16" viewBox="0 0 16 16"><path d="M1.2 1.2 L14.5 8 L1.2 14.8 Z" fill="#fff" stroke="#2f5f8a" stroke-width="1.7" stroke-linejoin="round"/></svg>
<svg style="left:383px;top:33px" width="9" height="5" viewBox="0 0 9 5"><path d="M0.5 0.5 H8.5 L4.5 4.5 Z" fill="#222"/></svg>
<svg style="left:402px;top:29px" width="10" height="14" viewBox="0 0 10 14"><path d="M1.9 0 V14 M8.1 0 V14" stroke="#a3a3a3" stroke-width="3.7"/></svg>
<svg style="left:424px;top:29px" width="14" height="14" viewBox="0 0 14 14"><rect x="1" y="1" width="12" height="12" fill="none" stroke="#a3a3a3" stroke-width="2"/></svg>
<svg style="left:447px;top:33px" width="9" height="5" viewBox="0 0 9 5"><path d="M0.5 0.5 H8.5 L4.5 4.5 Z" fill="#8c8c8c"/></svg>
<svg style="left:462px;top:29px" width="17" height="14" viewBox="0 0 17 14"><path d="M0.8 7 C4 1 13 1 16.2 7 C13 13 4 13 0.8 7 Z" fill="#fff" stroke="#2f5f8a" stroke-width="1.6"/><circle cx="8.5" cy="6.6" r="3.6" fill="#2f5f8a"/></svg>
<svg style="left:485px;top:28px" width="17" height="16" viewBox="0 0 17 16"><ellipse cx="8.5" cy="9.2" rx="4" ry="5.2" fill="#2f5f8a" stroke="#2f5f8a" stroke-width="1.6"/><path d="M5.2 5.2 C5.5 1.8 11.5 1.8 11.8 5.2 M4.2 7 L1 5 M12.8 7 L16 5 M4 10 H0.8 M13 10 H16.2 M5 13 L1.8 15.5 M12 13 L15.2 15.5" fill="none" stroke="#2f5f8a" stroke-width="1.5"/></svg>
<svg style="left:508px;top:28px" width="17" height="16" viewBox="0 0 17 16"><path d="M1.2 3 L13 9 L1.2 15 Z" fill="none" stroke="#2f5f8a" stroke-width="1.6" stroke-linejoin="round"/><path d="M7 2.2 C10 0.2 14 1.5 15 4.8 M15.6 1.2 L15.2 5.2 L11.4 4.4" fill="none" stroke="#2f5f8a" stroke-width="1.4"/></svg>
<svg style="left:539px;top:28px" width="16" height="16" viewBox="0 0 16 16"><path d="M1 1 L5 5 M2 5.5 H5.5 V2 M13 1 L9 5 M12 5.5 H8.5 V2 M1 13 L5 9 M2 8.5 H5.5 V12 M9 9 L11 11" fill="none" stroke="#2f5f8a" stroke-width="1.4"/><path d="M9 13 L11 15 L15.5 9.5" fill="none" stroke="#2f5f8a" stroke-width="1.4"/></svg>
<svg style="left:562px;top:28px" width="17" height="16" viewBox="0 0 17 16"><path d="M1 3.5 V11.5 C1 13.6 6 14 7 13.6 M12 3.5 V7" fill="none" stroke="#2f5f8a" stroke-width="1.4"/><ellipse cx="6.5" cy="3.5" rx="5.5" ry="2.3" fill="none" stroke="#2f5f8a" stroke-width="1.4"/><path d="M1 6.5 C1 9 8 9.3 10 8.5" fill="none" stroke="#2f5f8a" stroke-width="1.3"/><path d="M5.5 15 L9.5 10.5 L12 13 L16 8.5 M12.8 8.2 H16.2 V11.6" fill="none" stroke="#2f5f8a" stroke-width="1.4"/></svg>
<svg style="left:585px;top:28px" width="16" height="16" viewBox="0 0 16 16"><path d="M4.5 12.5 V2.5 C4.5 1.2 6 1.2 6 1.2 H14.5 C13 1.2 12.5 2.5 12.5 3.5 V12.5 C12.5 14.5 10.5 14.8 9.5 14.8 H3 C1.2 14.8 1 13.4 1 12.5 H9.5 C9.5 13.5 9.8 14.6 10.8 14.6" fill="none" stroke="#2f5f8a" stroke-width="1.4" stroke-linejoin="round"/><path d="M7 5.2 L10.5 7.4 L7 9.6 Z" fill="none" stroke="#2f5f8a" stroke-width="1.2" stroke-linejoin="round"/></svg>
<svg style="left:608px;top:28px" width="17" height="16" viewBox="0 0 17 16"><path d="M1 3.5 V11.5 C1 13.6 5 14.1 7 13.8 M12 3.5 V7" fill="none" stroke="#2f5f8a" stroke-width="1.4"/><ellipse cx="6.5" cy="3.5" rx="5.5" ry="2.3" fill="none" stroke="#2f5f8a" stroke-width="1.4"/><path d="M1 6.5 C1 9 6 9.3 8 8.8" fill="none" stroke="#2f5f8a" stroke-width="1.3"/><circle cx="11.3" cy="11" r="2.9" fill="none" stroke="#2f5f8a" stroke-width="1.4"/><path d="M13.4 13.1 L16 15.7" stroke="#2f5f8a" stroke-width="1.6"/></svg>
<svg style="left:639px;top:28px" width="17" height="16" viewBox="0 0 17 16"><rect x="1" y="1" width="14.5" height="14" fill="#fff" stroke="#2f5f8a" stroke-width="1.6"/><rect x="3.6" y="3.5" width="4.2" height="4.2" fill="#2f5f8a"/><rect x="8.5" y="8.3" width="4.6" height="4.4" fill="#2f5f8a"/></svg>
<div class="a " style="left:667px;top:24px;width:80px;height:23px;background:#fff;border:1px solid #7c7c7c;border-top:none;border-bottom:none"></div>
<div class="t " style="left:671px;top:28.0px;letter-spacing:-0.3px"><i class="l">100%</i></div>
<svg style="left:733px;top:33px" width="10" height="6" viewBox="0 0 10 6"><path d="M0.8 0.8 L5 5 L9.2 0.8" fill="none" stroke="#444" stroke-width="1.2"/></svg>
<div class="a " style="left:356px;top:47px;width:1535px;height:537px;background:#fff;border:1px solid #a0a0a0;border-right:none"></div>
<div class="a " style="left:1877px;top:48px;width:14px;height:519px;background:#f0f0f0"></div>
<svg style="left:1880px;top:51px" width="9" height="6" viewBox="0 0 9 6"><path d="M0.8 5 L4.5 1.2 L8.2 5" fill="none" stroke="#b0b0b0" stroke-width="1.3"/></svg>
<svg style="left:1880px;top:555px" width="9" height="6" viewBox="0 0 9 6"><path d="M0.8 1 L4.5 4.8 L8.2 1" fill="none" stroke="#b0b0b0" stroke-width="1.3"/></svg>
<div class="a " style="left:357px;top:567px;width:1534px;height:17px;background:#f0f0f0"></div>
<svg style="left:363px;top:570px" width="6" height="9" viewBox="0 0 6 9"><path d="M5 0.8 L1.2 4.5 L5 8.2" fill="none" stroke="#b0b0b0" stroke-width="1.3"/></svg>
<svg style="left:1866px;top:570px" width="6" height="9" viewBox="0 0 6 9"><path d="M1 0.8 L4.8 4.5 L1 8.2" fill="none" stroke="#b0b0b0" stroke-width="1.3"/></svg>
<div class="note" style="left:367px;top:57px;width:406px;height:120px;padding:6px 0 0 10px;letter-spacing:0.02px">数据库查询，可以使得任意类型的输入数据<br>与数据库中的表数据进行<i class="l" style="font-size:21.6px;line-height:20px">left join</i>关联，免<br>去将数据导入到数据库中再进行<i class="l" style="font-size:18px">SQL</i>处理的<br>操作。</div>
<svg style="left:0px;top:0px" width="1891" height="897" viewBox="0 0 1891 897"><path d="M662 305.5 H1030" stroke="#3d5d7e" stroke-width="1.1" fill="none"/><path d="M815 299.5 L831 305.5 L815 311.5 L819 305.5 Z" fill="#3d5d7e"/></svg>
<div class="a " style="left:629px;top:288px;width:34px;height:34px;background:#fff;border:1px solid #5b86ad;border-radius:5px"></div>
<svg style="left:636px;top:293px" width="24" height="26" viewBox="0 0 24 26"><path d="M2 1.5 H13 L17.3 5.8 V17 L12 22.3 H2 Z" fill="#eaf3fb" stroke="none"/><path d="M2.2 1.6 V22 H11.5" fill="none" stroke="#4f7090" stroke-width="1.8" stroke-linejoin="round"/><path d="M2.2 1.6 H13 L17.2 5.8 V13.5 M13 1.6 V5.8 H17.2" fill="none" stroke="#6d8aa6" stroke-width="1.1" stroke-linejoin="round"/><path d="M5.5 9.3 H14 M5.5 11.8 H14 M5.5 14.3 H8.5" stroke="#9fb3c6" stroke-width="1"/><path d="M17.5 20.2 L22.6 25.3 M23 20.6 V25.6 H18" fill="none" stroke="#3f6080" stroke-width="1.5"/></svg>
<svg style="left:658px;top:280px" width="16" height="16" viewBox="0 0 16 16"><circle cx="8" cy="8" r="8" fill="#1fa52a"/><path d="M4 8.2 L7 11 L12.2 5.2" fill="none" stroke="#fff" stroke-width="2.3" stroke-linejoin="round"/></svg>
<div class="t " style="left:609px;top:329.5px;letter-spacing:0px">文本文件输入</div>
<div class="a " style="left:900px;top:287px;width:36px;height:36px;background:#fff;border:3px solid #1158a6;border-radius:6px"></div>
<svg style="left:909.5px;top:294.3px" width="22" height="26" viewBox="0 0 22 26"><path d="M2 5 V17 C2 20 15 20 15 17 V5" fill="#fbe6cc" stroke="#7f8c99" stroke-width="1.2"/><ellipse cx="8.5" cy="5" rx="6.5" ry="2.6" fill="#fdf2e2" stroke="#7f8c99" stroke-width="1.2"/><path d="M2 9 C2 12 15 12 15 9 M2 13 C2 16 15 16 15 13" fill="none" stroke="#7f8c99" stroke-width="1.1"/><circle cx="16.3" cy="17.8" r="3.1" fill="#fff" stroke="#5c7a99" stroke-width="1.2"/><path d="M18.6 20.2 L21.2 22.9" stroke="#5c7a99" stroke-width="1.5"/></svg>
<svg style="left:930px;top:280px" width="16" height="16" viewBox="0 0 16 16"><circle cx="8" cy="8" r="8" fill="#1fa52a"/><path d="M4 8.2 L7 11 L12.2 5.2" fill="none" stroke="#fff" stroke-width="2.3" stroke-linejoin="round"/></svg>
<div class="a " style="left:880px;top:325px;width:75px;height:24px;background:#e0eaf6;border-radius:12px"></div>
<div class="t " style="left:887.5px;top:329.5px;letter-spacing:0px">数据库查询</div>
<div class="a " style="left:354px;top:584px;width:1537px;height:313px;background:#fff"></div>
<div class="a " style="left:354px;top:584px;width:1537px;height:1px;background:#c8c8c8"></div>
<div class="t" style="left:358px;top:590px;font-size:15px;font-weight:bold;line-height:20px;height:20px;letter-spacing:0px">执行结果</div>
<svg style="left:1858px;top:589px" width="16" height="17" viewBox="0 0 16 17"><path d="M7 3 H1.2 V15.2 H13.5 V9.5" fill="none" stroke="#2f5f8a" stroke-width="1.7"/><path d="M6.5 10 L14 2.2 M8.8 1.6 H14.6 V7.4" fill="none" stroke="#2f5f8a" stroke-width="1.7"/></svg>
<svg style="left:1879px;top:590px" width="14" height="14" viewBox="0 0 14 14"><path d="M1 1 L13 13 M13 1 L1 13" stroke="#2f5f8a" stroke-width="2"/></svg>
<div class="a " style="left:358px;top:613px;width:1540px;height:290px;background:#f0f0f0;border:1px solid #9a9a9a;border-radius:7px 0 0 0"></div>
<div class="a " style="left:359px;top:614px;width:1532px;height:20px;background:#fff;border-radius:6px 0 0 0"></div>
<svg style="left:0px;top:0px" width="1891" height="897" viewBox="0 0 1891 897"><path d="M697 634.5 C699.8 634.5 699.5 614.0 702.5 613.5 H789 C802.23 613.5 804.75 634.5 820.5 634.5 Z" fill="#f0f0f0"/><path d="M359 634.5 H697 C699.8 634.5 699.5 614.0 702.5 613.5 H789 C802.23 613.5 804.75 634.5 820.5 634.5 H1891" fill="none" stroke="#9a9a9a"/><path d="M411.5 634.5 V620.5 C411.5 616.5 413.0 614.3 416.5 613.5" fill="none" stroke="#9a9a9a"/><path d="M487 634.5 V620.5 C487 616.5 488.5 614.3 492 613.5" fill="none" stroke="#9a9a9a"/><path d="M563 634.5 V620.5 C563 616.5 564.5 614.3 568 613.5" fill="none" stroke="#9a9a9a"/><path d="M627 634.5 V620.5 C627 616.5 628.5 614.3 632 613.5" fill="none" stroke="#9a9a9a"/></svg>
<svg style="left:364px;top:616.5px" width="13" height="16" viewBox="0 0 13 16"><rect x="1" y="3" width="10.5" height="12" fill="#fff" stroke="#2f5f8a" stroke-width="1.5"/><path d="M3.3 7 H9.2 M3.3 9.7 H9.2 M3.3 12.3 H9.2" stroke="#2f5f8a" stroke-width="1.1"/><path d="M0.3 3 H12.2" stroke="#2f5f8a" stroke-width="2.6"/><path d="M2.6 0.6 V3 M5 0.6 V3 M7.4 0.6 V3 M9.8 0.6 V3" stroke="#2f5f8a" stroke-width="1"/></svg>
<div class="t " style="left:382px;top:617.0px;letter-spacing:0px">日志</div>
<svg style="left:414px;top:616px" width="17" height="17" viewBox="0 0 17 17"><circle cx="8.5" cy="8.5" r="7.2" fill="#fff" stroke="#2f5f8a" stroke-width="1.5"/><path d="M9.3 4.5 V9.6 H5.5" fill="none" stroke="#2f5f8a" stroke-width="1.6"/></svg>
<div class="t " style="left:434.5px;top:617.0px;letter-spacing:0px">执行历史</div>
<svg style="left:489px;top:616px" width="17" height="17" viewBox="0 0 17 17"><path d="M6.5 2.5 H16.5 M6.5 8.5 H14 M6.5 14.5 H16.5" stroke="#2f5f8a" stroke-width="1.5"/><text x="0" y="6.6" font-size="7.5" font-weight="bold" font-family="Liberation Sans,sans-serif" fill="#2f5f8a">1</text><text x="0" y="16.8" font-size="7.5" font-weight="bold" font-family="Liberation Sans,sans-serif" fill="#2f5f8a">2</text></svg>
<div class="t " style="left:510.5px;top:617.0px;letter-spacing:0px">步骤度量</div>
<svg style="left:566px;top:616px" width="16" height="17" viewBox="0 0 16 17"><path d="M1.2 1.5 V15 H15.5" fill="none" stroke="#2f5f8a" stroke-width="1.6"/><path d="M4 11 L8 6.5 L10.2 9 L14 4.5 M11.2 4 H14.4 V7.2" fill="none" stroke="#2f5f8a" stroke-width="1.4"/></svg>
<div class="t " style="left:586px;top:617.0px;letter-spacing:0px">性能图</div>
<svg style="left:630px;top:616px" width="16" height="17" viewBox="0 0 16 17"><path d="M1.3 1 V15 H16" fill="none" stroke="#2f5f8a" stroke-width="1.8"/><path d="M3.5 3.2 H9.5 M6 7 H12.5 M8.5 10.8 H14.5" stroke="#2f5f8a" stroke-width="2.2"/></svg>
<div class="t " style="left:650px;top:617.0px;"><i class="l">Metrics</i></div>
<svg style="left:701px;top:617px" width="17" height="14" viewBox="0 0 17 14"><path d="M0.8 7 C4 1 13 1 16.2 7 C13 13 4 13 0.8 7 Z" fill="#fff" stroke="#2f5f8a" stroke-width="1.5"/><circle cx="8.5" cy="6.6" r="3.6" fill="#2f5f8a"/></svg>
<div class="t " style="left:721px;top:617.0px;"><i class="l">Preview data</i></div>
<svg style="left:363px;top:641.5px" width="13" height="13" viewBox="0 0 13 13"><circle cx="6.5" cy="6.5" r="5.9" fill="#fff" stroke="#333" stroke-width="1.1"/><circle cx="6.5" cy="6.5" r="3.4" fill="#222"/></svg>
<div class="t " style="left:379px;top:640.5px;letter-spacing:-0.1px"><i class="l">${TransPreview.FirstRows.Label}</i></div>
<svg style="left:571px;top:641.5px" width="13" height="13" viewBox="0 0 13 13"><circle cx="6.5" cy="6.5" r="5.9" fill="#fff" stroke="#333" stroke-width="1.1"/></svg>
<div class="t " style="left:587px;top:640.5px;letter-spacing:-0.1px"><i class="l">${TransPreview.LastRows.Label}</i></div>
<svg style="left:778px;top:641.5px" width="13" height="13" viewBox="0 0 13 13"><circle cx="6.5" cy="6.5" r="5.9" fill="#fff" stroke="#333" stroke-width="1.1"/></svg>
<div class="t " style="left:794px;top:640.5px;letter-spacing:-0.1px"><i class="l">${TransPreview.Off.Label}</i></div>
<div class="a " style="left:359px;top:668.5px;width:1516px;height:233px;background:#fff"></div>
<div class="a " style="left:360px;top:693px;width:25px;height:210px;background:#f7f7f7"></div>
<svg style="left:0px;top:0px" width="1891" height="897" viewBox="0 0 1891 897"><path d="M359 692.5 H1874" stroke="#ececec"/><path d="M359 713.5 H1874" stroke="#ececec"/><path d="M359 734.5 H1874" stroke="#ececec"/><path d="M359 755.5 H1874" stroke="#ececec"/><path d="M359 776.5 H1874" stroke="#ececec"/><path d="M359 797.5 H1874" stroke="#ececec"/><path d="M359 818.5 H1874" stroke="#ececec"/><path d="M359 839.5 H1874" stroke="#ececec"/><path d="M359 860.5 H1874" stroke="#ececec"/><path d="M359 881.5 H1874" stroke="#ececec"/><path d="M359 902.5 H1874" stroke="#ececec"/><path d="M385.5 668 V897" stroke="#e4e9f2"/><path d="M484.5 668 V897" stroke="#e4e9f2"/><path d="M535.5 668 V897" stroke="#e4e9f2"/><path d="M584.5 668 V897" stroke="#e4e9f2"/><path d="M649.5 668 V897" stroke="#e4e9f2"/><path d="M764.5 668 V897" stroke="#e4e9f2"/></svg>
<svg style="left:369px;top:668.7px" width="9" height="5" viewBox="0 0 9 5"><path d="M0.8 4.2 L4.5 0.8 L8.2 4.2" fill="none" stroke="#555" stroke-width="0.9"/></svg>
<div class="t " style="left:367px;top:673.5px;"><i class="l">#</i></div>
<div class="t " style="left:392px;top:673.5px;"><i class="l">name</i></div>
<div class="t r " style="right:1361px;top:673.5px;"><i class="l">age</i></div>
<div class="t r " style="right:1312px;top:673.5px;"><i class="l">sex</i></div>
<div class="t r " style="right:1247px;top:673.5px;"><i class="l">salary</i></div>
<div class="t " style="left:656.5px;top:673.5px;"><i class="l">phone_number</i></div>
<div class="t " style="left:367px;top:696.0px;"><i class="l">1</i></div>
<div class="t " style="left:392px;top:696.0px;"><i class="l">Rjwocifmu</i></div>
<div class="t r " style="right:1363px;top:696.0px;"><i class="l">45</i></div>
<div class="t r " style="right:1313px;top:696.0px;"><i class="l">0</i></div>
<div class="t r " style="right:1249px;top:696.0px;"><i class="l">20101</i></div>
<div class="t " style="left:656.5px;top:696.0px;"><i class="l">15939813527</i></div>
<div class="t " style="left:367px;top:717.0px;"><i class="l">2</i></div>
<div class="t " style="left:392px;top:717.0px;"><i class="l">Ieskrwckk</i></div>
<div class="t r " style="right:1363px;top:717.0px;"><i class="l">46</i></div>
<div class="t r " style="right:1313px;top:717.0px;"><i class="l">0</i></div>
<div class="t r " style="right:1249px;top:717.0px;"><i class="l">21534</i></div>
<div class="t " style="left:656.5px;top:717.0px;"><i class="l">15939814627</i></div>
<div class="t " style="left:367px;top:738.0px;"><i class="l">3</i></div>
<div class="t " style="left:392px;top:738.0px;"><i class="l">Skgleqosu</i></div>
<div class="t r " style="right:1363px;top:738.0px;"><i class="l">37</i></div>
<div class="t r " style="right:1313px;top:738.0px;"><i class="l">0</i></div>
<div class="t r " style="right:1249px;top:738.0px;"><i class="l">20259</i></div>
<div class="t " style="left:656.5px;top:738.0px;"><i class="l">15939813767</i></div>
<div class="t " style="left:367px;top:759.0px;"><i class="l">4</i></div>
<div class="t " style="left:392px;top:759.0px;"><i class="l">Sfheedjid</i></div>
<div class="t r " style="right:1363px;top:759.0px;"><i class="l">30</i></div>
<div class="t r " style="right:1313px;top:759.0px;"><i class="l">1</i></div>
<div class="t r " style="right:1249px;top:759.0px;"><i class="l">16486</i></div>
<div class="t " style="left:657.5px;top:759.0px;color:#1010e0"><i class="l">&lt;null&gt;</i></div>
<div class="t " style="left:367px;top:780.0px;"><i class="l">5</i></div>
<div class="t " style="left:392px;top:780.0px;"><i class="l">Ssfdjgdrp</i></div>
<div class="t r " style="right:1363px;top:780.0px;"><i class="l">32</i></div>
<div class="t r " style="right:1313px;top:780.0px;"><i class="l">0</i></div>
<div class="t r " style="right:1249px;top:780.0px;"><i class="l">19925</i></div>
<div class="t " style="left:656.5px;top:780.0px;"><i class="l">15939888527</i></div>
<div class="t " style="left:367px;top:801.0px;"><i class="l">6</i></div>
<div class="t " style="left:392px;top:801.0px;"><i class="l">Coakcbugt</i></div>
<div class="t r " style="right:1363px;top:801.0px;"><i class="l">23</i></div>
<div class="t r " style="right:1313px;top:801.0px;"><i class="l">1</i></div>
<div class="t r " style="right:1249px;top:801.0px;"><i class="l">18207</i></div>
<div class="t " style="left:656.5px;top:801.0px;"><i class="l">15939813544</i></div>
<div class="t " style="left:367px;top:822.0px;"><i class="l">7</i></div>
<div class="t " style="left:392px;top:822.0px;"><i class="l">Kyvirozly</i></div>
<div class="t r " style="right:1363px;top:822.0px;"><i class="l">43</i></div>
<div class="t r " style="right:1313px;top:822.0px;"><i class="l">1</i></div>
<div class="t r " style="right:1249px;top:822.0px;"><i class="l">15335</i></div>
<div class="t " style="left:657.5px;top:822.0px;color:#1010e0"><i class="l">&lt;null&gt;</i></div>
<div class="t " style="left:367px;top:843.0px;"><i class="l">8</i></div>
<div class="t " style="left:392px;top:843.0px;"><i class="l">Reebtrsqk</i></div>
<div class="t r " style="right:1363px;top:843.0px;"><i class="l">45</i></div>
<div class="t r " style="right:1313px;top:843.0px;"><i class="l">1</i></div>
<div class="t r " style="right:1249px;top:843.0px;"><i class="l">19498</i></div>
<div class="t " style="left:657.5px;top:843.0px;color:#1010e0"><i class="l">&lt;null&gt;</i></div>
<div class="t " style="left:367px;top:864.0px;"><i class="l">9</i></div>
<div class="t " style="left:392px;top:864.0px;"><i class="l">Kgxiasvuh</i></div>
<div class="t r " style="right:1363px;top:864.0px;"><i class="l">20</i></div>
<div class="t r " style="right:1313px;top:864.0px;"><i class="l">1</i></div>
<div class="t r " style="right:1249px;top:864.0px;"><i class="l">19482</i></div>
<div class="t " style="left:657.5px;top:864.0px;color:#1010e0"><i class="l">&lt;null&gt;</i></div>
<div class="t " style="left:367px;top:885.0px;"><i class="l">10</i></div>
<div class="t " style="left:392px;top:885.0px;"><i class="l">Uwlagtmvm</i></div>
<div class="t r " style="right:1363px;top:885.0px;"><i class="l">27</i></div>
<div class="t r " style="right:1313px;top:885.0px;"><i class="l">1</i></div>
<div class="t r " style="right:1249px;top:885.0px;"><i class="l">19120</i></div>
<div class="t " style="left:657.5px;top:885.0px;color:#1010e0"><i class="l">&lt;null&gt;</i></div>
<div class="a " style="left:1875px;top:668.5px;width:17px;height:233px;background:#f0f0f0"></div>
<div class="a " style="left:1875px;top:686px;width:15px;height:70px;background:#cdcdcd"></div>
<svg style="left:1878px;top:675px" width="10" height="6" viewBox="0 0 10 6"><path d="M1 5 L5 1 L9 5" fill="none" stroke="#505050" stroke-width="1.6"/></svg>
<div class="a " style="left:1025px;top:74px;width:484px;height:721px;background:#fff;border:1px solid #8c8c8c;box-shadow:0 3px 12px 2px rgba(0,0,0,.3)"></div>
<svg style="left:1037px;top:83px" width="12" height="13" viewBox="0 0 12 13"><path d="M1 2.5 V9 C1 10.8 8 10.8 8 9 V2.5" fill="#f3e3c8" stroke="#9aa4ae" stroke-width="0.9"/><ellipse cx="4.5" cy="2.5" rx="3.5" ry="1.5" fill="#f9efdd" stroke="#9aa4ae" stroke-width="0.9"/><circle cx="8.2" cy="9" r="1.8" fill="#fff" stroke="#7f8fa0" stroke-width="0.9"/><path d="M9.5 10.4 L11.3 12.3" stroke="#7f8fa0" stroke-width="1"/></svg>
<div class="t " style="left:1055px;top:82.5px;color:#9a9a9a;letter-spacing:0px">数据库查询</div>
<svg style="left:1389px;top:84px" width="110" height="12" viewBox="0 0 110 12"><path d="M0 5.5 H10" stroke="#8a8a8a" stroke-width="1"/><rect x="45.5" y="0.5" width="10" height="10" fill="none" stroke="#6a6a6a" stroke-width="1"/><path d="M91 0.5 L101.5 11 M101.5 0.5 L91 11" stroke="#6a6a6a" stroke-width="1"/></svg>
<div class="t r " style="right:699px;top:116.0px;">步骤名称</div>
<div class="a inp" style="left:1196px;top:114px;width:307px;height:23px;"></div>
<div class="t " style="left:1200px;top:118.5px;">数据库查询</div>
<div class="t r " style="right:703px;top:142.0px;">数据库连接</div>
<div class="a " style="left:1196px;top:141px;width:143px;height:21px;background:#fff;border:1px solid #c8c8c8"></div>
<div class="t " style="left:1200px;top:144.5px;letter-spacing:0.2px"><i class="l">hadoop13_mysql</i></div>
<div class="a " style="left:1321px;top:143px;width:16px;height:17px;background:#e9e9e9"></div>
<svg style="left:1324px;top:148px" width="10" height="7" viewBox="0 0 10 7"><path d="M1 1 L5 5.2 L9 1" fill="none" stroke="#333" stroke-width="1.5"/></svg>
<div class="btn" style="left:1344px;top:142px;width:43px;height:25px;line-height:23px;padding-top:1.4px;">编辑<i class="l">...</i></div>
<div class="btn" style="left:1393px;top:142px;width:43px;height:25px;line-height:23px;padding-top:1.4px;">新建<i class="l">...</i></div>
<div class="btn" style="left:1442px;top:142px;width:60px;height:25px;line-height:23px;padding-top:1.4px;"><i class="l">Wizard...</i></div>
<div class="t r " style="right:699px;top:172.0px;">模式名称</div>
<div class="a inp" style="left:1196px;top:170px;width:229px;height:23px;"></div>
<svg style="left:1425px;top:174.0px" width="13" height="13" viewBox="0 0 13 13"><path d="M6.5 0.3 L12.7 6.5 L6.5 12.7 L0.3 6.5 Z" fill="#2b6a93"/><text x="6.5" y="9.6" font-size="8.5" font-weight="bold" text-anchor="middle" font-family="Liberation Sans,sans-serif" fill="#fff">$</text></svg>
<div class="btn" style="left:1443px;top:171px;width:59px;height:23px;line-height:21px;padding-top:1.4px;">浏览<i class="l">(B)...</i></div>
<div class="t r " style="right:699px;top:202.5px;">表名</div>
<div class="a inp" style="left:1196px;top:201px;width:245px;height:23px;"></div>
<div class="t " style="left:1200px;top:205.0px;"><i class="l">user_phone_num</i></div>
<svg style="left:1440px;top:205.5px" width="13" height="13" viewBox="0 0 13 13"><path d="M6.5 0.3 L12.7 6.5 L6.5 12.7 L0.3 6.5 Z" fill="#2b6a93"/><text x="6.5" y="9.6" font-size="8.5" font-weight="bold" text-anchor="middle" font-family="Liberation Sans,sans-serif" fill="#fff">$</text></svg>
<div class="btn" style="left:1459px;top:203px;width:43px;height:24px;line-height:22px;padding-top:1.4px;">浏览<i class="l">...</i></div>
<div class="t r " style="right:699px;top:229.0px;">使用缓存</div>
<div class="a cb" style="left:1196px;top:230px;width:13px;height:13px;"></div>
<div class="t r " style="right:699px;top:251.0px;color:#a0a0a0">缓存大小</div>
<div class="a " style="left:1196px;top:249px;width:307px;height:22px;background:#f0f0f0;border:1px solid #dcdcdc"></div>
<div class="t " style="left:1200px;top:252.5px;color:#8a8a8a"><i class="l">0</i></div>
<div class="t r " style="right:699px;top:277.0px;color:#a0a0a0">从表中加载所有数据</div>
<div class="a cb" style="left:1196px;top:278px;width:13px;height:13px;border-color:#c6c6c6"></div>
<div class="t " style="left:1031px;top:298.5px;">查询所需的关键字<i class="l">:</i></div>
<div class="a " style="left:1031px;top:318px;width:472px;height:169px;background:#fff;border:1px solid #828790"></div>
<div class="a " style="left:1032px;top:344px;width:25.0px;height:142px;background:#f5f5f5"></div>
<svg style="left:0px;top:0px" width="1891" height="897" viewBox="0 0 1891 897"><path d="M1032 344.5 H1502" stroke="#ededed"/><path d="M1032 365.5 H1502" stroke="#ededed"/><path d="M1032 386.5 H1502" stroke="#ededed"/><path d="M1032 407.5 H1502" stroke="#ededed"/><path d="M1032 428.5 H1502" stroke="#ededed"/><path d="M1032 449.5 H1502" stroke="#ededed"/><path d="M1032 470.5 H1502" stroke="#ededed"/><path d="M1057.5 320 V486" stroke="#e3e8f1"/><path d="M1123.5 320 V486" stroke="#e3e8f1"/><path d="M1227.5 320 V486" stroke="#e3e8f1"/><path d="M1289.5 320 V486" stroke="#e3e8f1"/><path d="M1350.5 320 V486" stroke="#e3e8f1"/></svg>
<svg style="left:1041px;top:320.3px" width="9" height="5" viewBox="0 0 9 5"><path d="M0.8 4.2 L4.5 0.8 L8.2 4.2" fill="none" stroke="#555" stroke-width="0.9"/></svg>
<div class="t " style="left:1039px;top:324.0px;"><i class="l">#</i></div>
<div class="t " style="left:1064px;top:324.0px;">表字段</div>
<div class="t " style="left:1130px;top:324.0px;">比较操作符</div>
<div class="t " style="left:1234px;top:324.0px;">字段<i class="l">1</i></div>
<div class="t " style="left:1296px;top:324.0px;">字段<i class="l">2</i></div>
<div class="t " style="left:1040px;top:347.5px;"><i class="l">1</i></div>
<div class="t " style="left:1064px;top:347.5px;"><i class="l">name</i></div>
<div class="t " style="left:1131px;top:347.5px;"><i class="l">=</i></div>
<div class="t " style="left:1234px;top:347.5px;"><i class="l">name</i></div>
<div class="t " style="left:1031px;top:492.0px;">查询表返回的值<span style="margin-left:4px">：</span></div>
<div class="a " style="left:1031px;top:512px;width:472px;height:168px;background:#fff;border:1px solid #828790"></div>
<div class="a " style="left:1032px;top:538px;width:25.0px;height:141px;background:#f5f5f5"></div>
<svg style="left:0px;top:0px" width="1891" height="897" viewBox="0 0 1891 897"><path d="M1032 538.5 H1502" stroke="#ededed"/><path d="M1032 559.5 H1502" stroke="#ededed"/><path d="M1032 580.5 H1502" stroke="#ededed"/><path d="M1032 601.5 H1502" stroke="#ededed"/><path d="M1032 622.5 H1502" stroke="#ededed"/><path d="M1032 643.5 H1502" stroke="#ededed"/><path d="M1032 664.5 H1502" stroke="#ededed"/><path d="M1057.5 514 V679" stroke="#e3e8f1"/><path d="M1172.5 514 V679" stroke="#e3e8f1"/><path d="M1250.5 514 V679" stroke="#e3e8f1"/><path d="M1304.5 514 V679" stroke="#e3e8f1"/><path d="M1422.5 514 V679" stroke="#e3e8f1"/></svg>
<svg style="left:1041px;top:514.3px" width="9" height="5" viewBox="0 0 9 5"><path d="M0.8 4.2 L4.5 0.8 L8.2 4.2" fill="none" stroke="#555" stroke-width="0.9"/></svg>
<div class="t " style="left:1039px;top:518.0px;"><i class="l">#</i></div>
<div class="t " style="left:1064px;top:518.0px;">字段</div>
<div class="t " style="left:1179px;top:518.0px;">新的名称</div>
<div class="t " style="left:1257px;top:518.0px;">默认</div>
<div class="t " style="left:1311px;top:518.0px;">类型</div>
<div class="t " style="left:1040px;top:541.5px;"><i class="l">1</i></div>
<div class="t " style="left:1064px;top:541.5px;"><i class="l">phone_number</i></div>
<div class="t " style="left:1311px;top:541.5px;"><i class="l">String</i></div>
<div class="t r " style="right:699px;top:686.5px;">查询失败则忽略</div>
<div class="a cb" style="left:1196px;top:687px;width:13px;height:13px;"></div>
<div class="t r " style="right:699px;top:707.5px;">多行结果时失败</div>
<div class="a cb" style="left:1196px;top:708px;width:13px;height:13px;"></div>
<div class="t r " style="right:699px;top:728.0px;">排序</div>
<div class="a inp" style="left:1196px;top:727px;width:307px;height:23px;"></div>
<div class="btn" style="left:1032px;top:763px;width:59px;height:25px;line-height:23px;padding-top:1.4px;border-color:#c8c8c8"></div>
<svg style="left:1040px;top:767px" width="16" height="16" viewBox="0 0 16 16"><circle cx="8" cy="8" r="6.9" fill="#fff" stroke="#2f5f8a" stroke-width="1.5"/><text x="8" y="12" font-size="11" font-weight="bold" text-anchor="middle" font-family="Liberation Sans,sans-serif" fill="#2f5f8a">?</text></svg>
<div class="t " style="left:1060px;top:768.0px;"><i class="l">Help</i></div>
<div class="btn" style="left:1090px;top:763px;width:61px;height:25px;line-height:23px;padding-top:1.4px;border-color:#c8c8c8"></div>
<div class="t " style="left:1095px;top:768.0px;"><i class="l">(O)</i></div>
<div class="btn" style="left:1150px;top:763px;width:117px;height:25px;line-height:23px;padding-top:1.4px;border-color:#c8c8c8;padding-left:10px">取消<i class="l">(C)</i></div>
<div class="btn" style="left:1273px;top:763px;width:105px;height:25px;line-height:23px;padding-top:1.4px;padding-left:9px">获取查询关键字</div>
<div class="btn" style="left:1391px;top:763px;width:111px;height:25px;line-height:23px;padding-top:1.4px;padding-left:3px">获取返回字段</div>
<div class="dash" style="left:52px;top:431.3px;width:128px;height:35px"></div><svg style="left:54px;top:433.3px" width="124" height="31"><rect x="1.05" y="1.05" width="121.9" height="28.9" fill="none" stroke="#ff4545" stroke-width="2" stroke-dasharray="10 4.6 3.8 4.6" stroke-dashoffset="5"/></svg>
<div class="num" style="left:177.5px;top:430.0px"><b>1</b></div>
<div class="dash" style="left:864px;top:264px;width:117px;height:95px"></div><svg style="left:866px;top:266px" width="113" height="91"><rect x="1.05" y="1.05" width="110.9" height="88.9" fill="none" stroke="#ff4545" stroke-width="2" stroke-dasharray="10 4.6 3.8 4.6" stroke-dashoffset="5"/></svg>
<div class="num" style="left:899.5px;top:358.0px"><b>2</b></div>
<div class="dash" style="left:1443px;top:194px;width:74px;height:38px"></div><svg style="left:1445px;top:196px" width="70" height="34"><rect x="1.05" y="1.05" width="67.9" height="31.9" fill="none" stroke="#ff4545" stroke-width="2" stroke-dasharray="10 4.6 3.8 4.6" stroke-dashoffset="5"/></svg>
<div class="num" style="left:1526.5px;top:204.5px"><b>3</b></div>
<div class="dash" style="left:1029.6px;top:337.5px;width:311.5px;height:41px"></div><svg style="left:1031.6px;top:339.5px" width="307.5" height="37"><rect x="1.05" y="1.05" width="305.4" height="34.9" fill="none" stroke="#ff4545" stroke-width="2" stroke-dasharray="10 4.6 3.8 4.6" stroke-dashoffset="5"/></svg>
<div class="num" style="left:1349.5px;top:341.5px"><b>5</b></div>
<div class="dash" style="left:1022px;top:529px;width:351px;height:41px"></div><svg style="left:1024px;top:531px" width="347" height="37"><rect x="1.05" y="1.05" width="344.9" height="34.9" fill="none" stroke="#ff4545" stroke-width="2" stroke-dasharray="10 4.6 3.8 4.6" stroke-dashoffset="5"/></svg>
<div class="num" style="left:1374.5px;top:533.0px"><b>7</b></div>
<div class="dash" style="left:1089px;top:746px;width:64px;height:50px"></div><svg style="left:1091px;top:748px" width="60" height="46"><rect x="1.05" y="1.05" width="57.9" height="43.9" fill="none" stroke="#ff4545" stroke-width="2" stroke-dasharray="10 4.6 3.8 4.6" stroke-dashoffset="5"/></svg>
<div class="num" style="left:1100.0px;top:799.5px"><b>8</b></div>
<div class="dash" style="left:1266px;top:755px;width:116px;height:40px"></div><svg style="left:1268px;top:757px" width="112" height="36"><rect x="1.05" y="1.05" width="109.9" height="33.9" fill="none" stroke="#ff4545" stroke-width="2" stroke-dasharray="10 4.6 3.8 4.6" stroke-dashoffset="5"/></svg>
<div class="num" style="left:1305.5px;top:791.5px"><b>4</b></div>
<div class="dash" style="left:1386px;top:752px;width:129px;height:43px"></div><svg style="left:1388px;top:754px" width="125" height="39"><rect x="1.05" y="1.05" width="122.9" height="36.9" fill="none" stroke="#ff4545" stroke-width="2" stroke-dasharray="10 4.6 3.8 4.6" stroke-dashoffset="5"/></svg>
<div class="num" style="left:1422.5px;top:791.5px"><b>6</b></div>
<div class="dash" style="left:343.5px;top:658.3px;width:430px;height:264px"></div><svg style="left:345.5px;top:660.3px" width="426" height="260"><rect x="1.05" y="1.05" width="423.9" height="257.9" fill="none" stroke="#ff4545" stroke-width="2" stroke-dasharray="10 4.6 3.8 4.6" stroke-dashoffset="5"/></svg>
<svg style="left:0px;top:0px" width="1891" height="897" viewBox="0 0 1891 897"><path d="M1566.5 221.6 L1603 220.4 L1603 230.6 Z" fill="#a9fbfd" stroke="#e8ffff" stroke-width="1" style="filter:drop-shadow(2px 3px 2px rgba(0,0,0,.35))"/></svg>
<div class="bub" style="left:1602px;top:199px;width:196.5px;height:44.5px;padding:6px 0 0 10px">选择需要关联的表</div>
<svg style="left:0px;top:0px" width="1891" height="897" viewBox="0 0 1891 897"><path d="M1604.5 220.9 L1602 221.20000000000002 L1602 229.79999999999998 L1604.5 230.1 Z" fill="#a9fbfd"/></svg>
<svg style="left:0px;top:0px" width="1891" height="897" viewBox="0 0 1891 897"><path d="M1377 379 L1421 396 L1421 430 Z" fill="#a9fbfd" stroke="#e8ffff" stroke-width="1" style="filter:drop-shadow(2px 3px 2px rgba(0,0,0,.35))"/></svg>
<div class="bub" style="left:1420px;top:347px;width:247px;height:101px;padding:5.5px 0 0 10px">点击第<i class="l">4</i>步后此处会将字<br>段全部列出，保留需要关<br>联的字段即可</div>
<svg style="left:0px;top:0px" width="1891" height="897" viewBox="0 0 1891 897"><path d="M1422.5 396.5 L1420 396.8 L1420 429.2 L1422.5 429.5 Z" fill="#a9fbfd"/></svg>
<svg style="left:0px;top:0px" width="1891" height="897" viewBox="0 0 1891 897"><path d="M1388 573.5 L1436 571.5 L1436 588 Z" fill="#a9fbfd" stroke="#e8ffff" stroke-width="1" style="filter:drop-shadow(2px 3px 2px rgba(0,0,0,.35))"/></svg>
<div class="bub" style="left:1435px;top:545px;width:266px;height:132px;padding:6px 0 0 10px">点击第<i class="l">6</i>步后，此处会将数<br>据库指定表中所有的字段列<br>出，保留需要输出的字段即<br>可。</div>
<svg style="left:0px;top:0px" width="1891" height="897" viewBox="0 0 1891 897"><path d="M1437.5 572.0 L1435 572.3 L1435 587.2 L1437.5 587.5 Z" fill="#a9fbfd"/></svg>
<div class="t" style="left:242px;top:764px;height:32px;line-height:32px;font-family:'Noto Serif CJK SC','Liberation Serif',serif;font-weight:500;font-size:23px;letter-spacing:0.3px;color:#ff0000;stroke-linejoin:round;-webkit-text-stroke:6px #fff;paint-order:stroke fill;filter:drop-shadow(2px 3px 2px rgba(0,0,0,.4))">结果见右</div>
<div class="t" style="left:1671px;top:832px;height:64px;line-height:64px;font-size:52.5px;font-weight:350;color:#e8e8e8;letter-spacing:0.9px;text-shadow:1px 1px 1px #a8a8a8,-0.5px -0.5px 0 #f6f6f6">熊大老师</div>
</body></html>
